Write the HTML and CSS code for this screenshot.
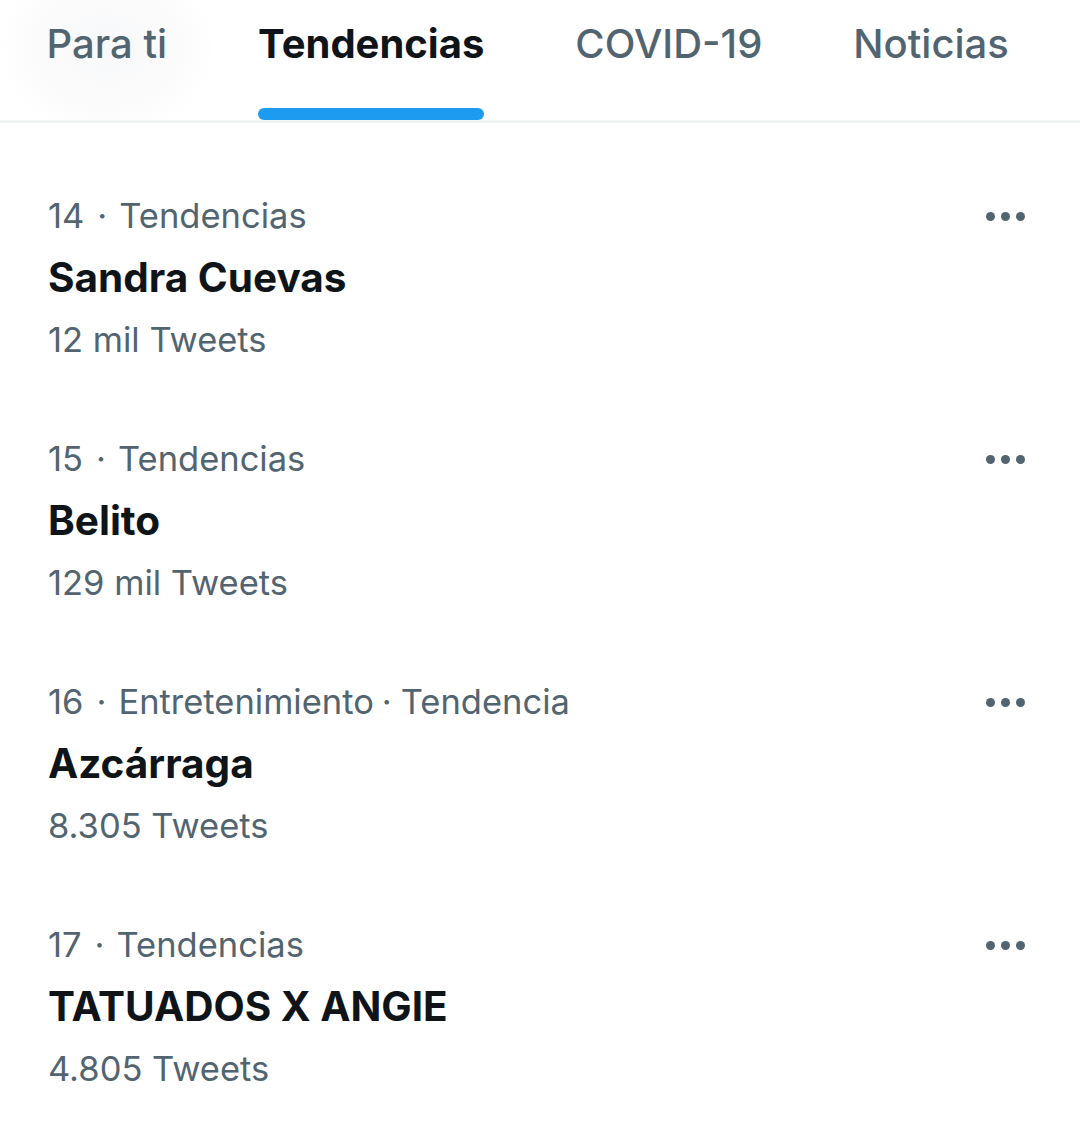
FILE: index.html
```html
<!DOCTYPE html>
<html lang="es">
<head>
<meta charset="utf-8">
<title>Tendencias</title>
<link rel="stylesheet" href="styles.css">
</head>
<body>
<nav class="tabs">
  <div class="tab tab-first"><span class="tab-label">Para ti</span></div>
  <div class="tab tab-active"><span class="tab-label">Tendencias</span><span class="indicator"></span></div>
  <div class="tab"><span class="tab-label">COVID-19</span></div>
  <div class="tab"><span class="tab-label">Noticias</span></div>
</nav>
<main class="trends">
  <article class="trend">
    <div class="trend-text">
      <div class="meta">14<span class="sep">·</span>Tendencias</div>
      <div class="title">Sandra Cuevas</div>
      <div class="count">12 mil Tweets</div>
    </div>
    <div class="more"><span></span><span></span><span></span></div>
  </article>
  <article class="trend">
    <div class="trend-text">
      <div class="meta">15<span class="sep">·</span>Tendencias</div>
      <div class="title">Belito</div>
      <div class="count">129 mil Tweets</div>
    </div>
    <div class="more"><span></span><span></span><span></span></div>
  </article>
  <article class="trend">
    <div class="trend-text">
      <div class="meta">16<span class="sep">·</span>Entretenimiento<span class="sep sep-tight">·</span>Tendencia</div>
      <div class="title">Azcárraga</div>
      <div class="count">8.305 Tweets</div>
    </div>
    <div class="more"><span></span><span></span><span></span></div>
  </article>
  <article class="trend">
    <div class="trend-text">
      <div class="meta">17<span class="sep">·</span>Tendencias</div>
      <div class="title">TATUADOS X ANGIE</div>
      <div class="count">4.805 Tweets</div>
    </div>
    <div class="more"><span></span><span></span><span></span></div>
  </article>
</main>
</body>
</html>
```
FILE: styles.css
```css
html, body {
  margin: 0;
  padding: 0;
  background: #ffffff;
}
body {
  font-family: Inter, Roboto, "Liberation Sans", sans-serif;
  color: #0f1419;
  width: 1080px;
  overflow: hidden;
}
.tabs {
  display: flex;
  height: 120px;
  border-bottom: 3px solid #eff3f4;
  padding-left: 1px;
  white-space: nowrap;
}
.tab {
  position: relative;
  display: flex;
  align-items: flex-start;
  padding: 0 45.5px;
  height: 120px;
}
.tab-first {
  background: radial-gradient(ellipse 110px 90px at 50% 40%, #f7f8f9 0%, #fbfbfc 60%, #ffffff 100%);
}
.tab-label {
  display: block;
  margin-top: 14px;
  font-size: 40px;
  line-height: 60px;
  font-weight: 500;
  color: #536471;
}
.tab-active .tab-label {
  font-weight: 700;
  color: #0f1419;
}
.indicator {
  position: absolute;
  left: 45.5px;
  right: 45.5px;
  bottom: 0;
  height: 12px;
  border-radius: 6px;
  background: #1d9bf0;
}
.trends {
  padding-top: 62px;
}
.trend {
  display: flex;
  justify-content: space-between;
  align-items: flex-start;
  padding: 0 55px 57px 48px;
}
.trend-text {
  display: flex;
  flex-direction: column;
}
.meta, .count {
  font-size: 34.5px;
  line-height: 62px;
  color: #536471;
}
.sep {
  margin: 0 12px 0 13px;
}
.sep-tight {
  margin: 0 9px 0 8px;
}
.title {
  font-size: 40.5px;
  line-height: 62px;
  font-weight: 700;
  color: #0f1419;
}
.more {
  display: flex;
  gap: 6px;
  margin-top: 27px;
}
.more span {
  width: 9px;
  height: 9px;
  border-radius: 50%;
  background: #536471;
}
```
